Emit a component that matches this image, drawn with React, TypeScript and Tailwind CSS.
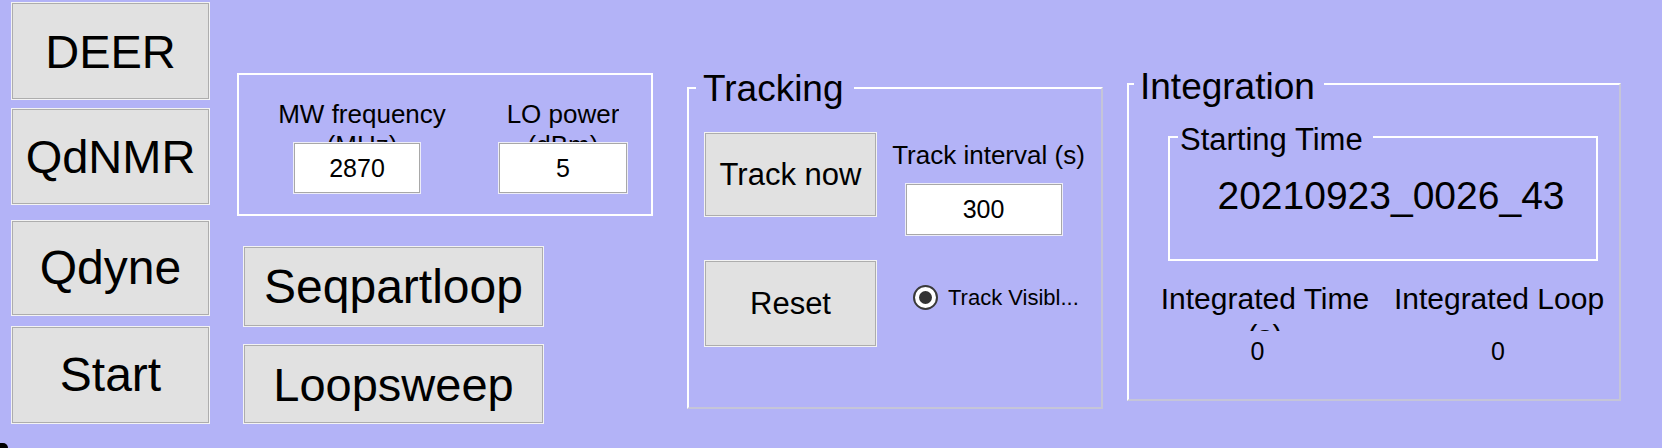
import type { ReactNode } from 'react'

const BG = 'bg-[#b3b3f7]'

function Btn({ label, className }: { label: string; className: string }) {
  return (
    <button
      type="button"
      className={`flex items-center justify-center border border-[#adadad] bg-[#e1e1e1] leading-none text-black shadow-[0_0_0_1px_#f3f3f3] ${className}`}
    >
      {label}
    </button>
  )
}

function Field({ value, className }: { value: string; className: string }) {
  return (
    <div
      className={`flex items-center justify-center border border-[#a8a8a8] bg-white text-[25px] leading-none shadow-[0_0_0_1px_#ededf8] ${className}`}
    >
      {value}
    </div>
  )
}

function GroupBox({
  title,
  titleClass,
  className,
  children,
}: {
  title: string
  titleClass: string
  className: string
  children: ReactNode
}) {
  return (
    <div
      className={`relative border-2 border-t-white border-l-white border-r-[#c5c5d8] border-b-[#c5c5d8] ${className}`}
    >
      <span className={`absolute whitespace-nowrap leading-none ${BG} ${titleClass}`}>{title}</span>
      {children}
    </div>
  )
}

export default function App() {
  return (
    <div
      className={`relative flex h-[448px] w-[1662px] overflow-hidden ${BG} font-['Liberation_Sans',Arial,sans-serif] text-black`}
    >
      {/* experiment buttons */}
      <div className="ml-[12px] mt-[3px] flex w-[197px] shrink-0 flex-col">
        <Btn label="DEER" className="h-[96px] text-[47px]" />
        <Btn label="QdNMR" className="mt-[10px] h-[95px] text-[47px]" />
        <Btn label="Qdyne" className="mt-[17px] h-[94px] text-[48px]" />
        <Btn label="Start" className="mt-[12px] h-[96px] text-[48px]" />
      </div>

      {/* MW settings + sequence buttons */}
      <div className="ml-[28px] mt-[73px] flex w-[416px] shrink-0 flex-col">
        <div className="flex h-[143px] border-2 border-white">
          <div className="ml-[33px] mt-[24px] flex w-[170px] flex-col items-center">
            <div className="ml-[10px] h-[44px] overflow-hidden whitespace-pre text-center text-[26px] leading-[31px]">
              {'MW frequency\n(MHz)'}
            </div>
            <Field value="2870" className="h-[50px] w-[126px]" />
          </div>
          <div className="ml-[36px] mt-[24px] flex w-[170px] flex-col items-center">
            <div className="h-[44px] overflow-hidden whitespace-pre text-center text-[26px] leading-[31px]">
              {'LO power\n(dBm)'}
            </div>
            <Field value="5" className="h-[50px] w-[128px]" />
          </div>
        </div>
        <Btn label="Seqpartloop" className="ml-[7px] mt-[31px] h-[79px] w-[299px] text-[48px]" />
        <Btn label="Loopsweep" className="ml-[7px] mt-[19px] h-[78px] w-[299px] text-[47px]" />
      </div>

      {/* Tracking */}
      <GroupBox
        title="Tracking"
        titleClass="left-[7px] top-[-19px] pl-[7px] pr-[10px] text-[37px]"
        className="ml-[34px] mt-[87px] h-[322px] w-[416px] shrink-0"
      >
        <div className="flex pl-[16px] pt-[44px]">
          <div className="flex w-[171px] flex-col">
            <Btn label="Track now" className="h-[83px] text-[31px]" />
            <Btn label="Reset" className="mt-[45px] h-[85px] text-[31px]" />
          </div>
          <div className="flex flex-1 flex-col items-center">
            <div className="mt-[9px] whitespace-nowrap text-[26px] leading-none">Track interval (s)</div>
            <Field value="300" className="mr-[10px] mt-[16px] h-[51px] w-[156px]" />
            <div className="ml-[37px] mt-[50px] flex items-center gap-[10px] self-start">
              <div className="flex h-[25px] w-[25px] items-center justify-center rounded-full border-2 border-[#3a3a3a] bg-white">
                <div className="h-[13px] w-[13px] rounded-full bg-[#333]" />
              </div>
              <span className="whitespace-nowrap text-[22px] leading-none">Track Visibl...</span>
            </div>
          </div>
        </div>
      </GroupBox>

      {/* Integration */}
      <GroupBox
        title="Integration"
        titleClass="left-[5px] top-[-17px] pl-[6px] pr-[9px] text-[37px]"
        className="ml-[24px] mt-[83px] h-[318px] w-[494px] shrink-0"
      >
        <div className="relative ml-[39px] mt-[51px] h-[125px] w-[430px] border-2 border-white">
          <span className={`absolute left-[8px] top-[-14px] whitespace-nowrap pl-[2px] pr-[10px] text-[31px] leading-none ${BG}`}>
            Starting Time
          </span>
          <div className="pl-[16px] pt-[38px] text-center text-[39px] leading-none">20210923_0026_43</div>
        </div>
        <div className="mt-[19px] flex">
          <div className="ml-[26px] flex w-[220px] flex-col items-center">
            <div className="h-[51px] overflow-hidden whitespace-pre text-center text-[30px] leading-[37px]">
              {'Integrated Time\n(s)'}
            </div>
            <div className="mr-[15px] mt-[8px] text-[25px] leading-none">0</div>
          </div>
          <div className="ml-[14px] flex w-[220px] flex-col items-center">
            <div className="h-[51px] overflow-hidden whitespace-nowrap text-center text-[30px] leading-[37px]">
              Integrated Loop
            </div>
            <div className="mr-[2px] mt-[8px] text-[25px] leading-none">0</div>
          </div>
        </div>
      </GroupBox>

      {/* clipped control at the lower edge */}
      <div className="absolute bottom-0 left-0 h-[5px] w-[8px] rounded-tr-full bg-black" />
    </div>
  )
}
